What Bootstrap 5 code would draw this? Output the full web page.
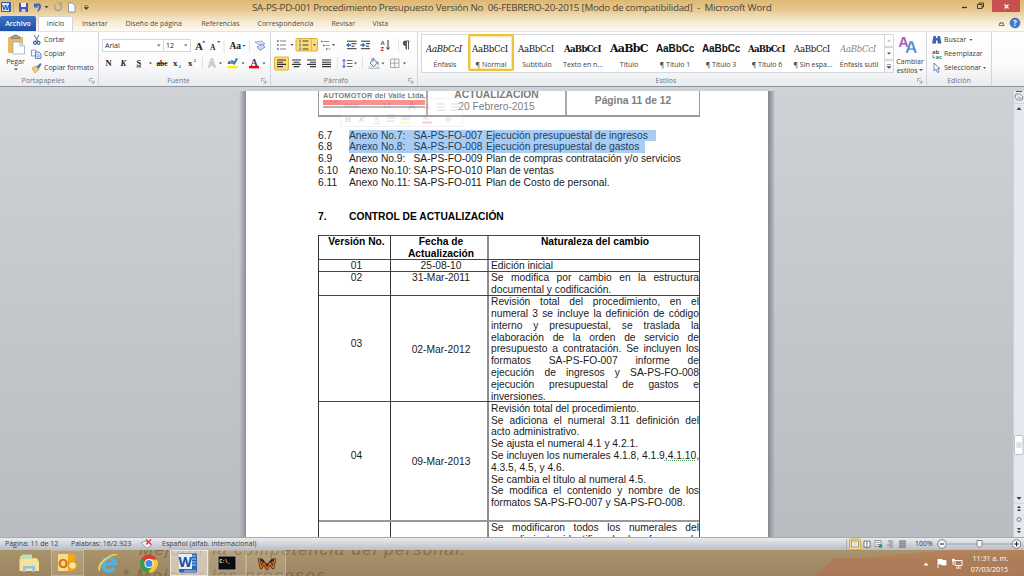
<!DOCTYPE html>
<html lang="es">
<head>
<meta charset="utf-8">
<title>Microsoft Word</title>
<link href="https://cdn.jsdelivr.net/npm/bootstrap@5.3.0/dist/css/bootstrap.min.css" rel="stylesheet">
<script src="https://cdn.jsdelivr.net/npm/bootstrap@5.3.0/dist/js/bootstrap.bundle.min.js"></script>
<style>
html,body{height:576px;overflow:hidden}
body{width:1024px;font-family:"Open Sans","Noto Sans",sans-serif;font-size:7px;line-height:10px;color:#3c3c3c;white-space:nowrap;background:#c5c9ce}
svg{display:block;flex:none;overflow:visible}
svg text{white-space:pre}
/* window frame */
.titlebar{height:16px}
.tabrow{height:15px;padding-right:2px}
.topframe{background:linear-gradient(#deb871 0,#e6c78c 30%,#f6ead2 70%,#fdfaf3 100%)}
.wintitle{font-size:9.8px;line-height:16px;color:#4c463c;white-space:pre;margin-left:158px;width:519px;letter-spacing:-.27px}
.closebtn{width:28px;height:12px;background:#c75050}
.filetab{width:36px;height:15px;background:linear-gradient(#3a75c9,#1d4fa5);color:#fff;border-radius:2px 2px 0 0;line-height:15px;font-weight:600}
.hometab{width:35px;height:15px;margin-left:2px;background:#fff;border:1px solid #d5d5d5;border-bottom:0;border-radius:2px 2px 0 0;line-height:14px}
.tabtxt{line-height:15px;color:#4c4c4c}
.t1{margin-left:9px;width:43.500px}.t2{width:76px}.t3{width:56px}.t4{width:74px}.t5{width:41px}
/* ribbon */
.ribbon{height:56px;background:linear-gradient(#fff,#fbfbfc 60%,#e9ebee);border-top:1px solid #e3e3e3;border-bottom:1px solid #8f959d}
.rgroup{border-right:1px solid #d3d6da;height:54px}
.rbody{height:44px}
.rlabel{height:10px;line-height:10px;color:#6d7888}
.launch{position:absolute;right:3px;top:2px}
.g1{width:99px}.g2{width:172px}.g3{width:147px}.g4{width:509px}.g5{width:65px}
.combo{height:13px;border:1px solid #d5d8dc;background:#fff;line-height:11px;padding-left:2px;color:#222}
.cfont{width:62px}.csize{width:28px;margin-left:-1px}
.row1{padding:5px 0 0 3px;height:22px}
.row2{height:18px}
.paste{width:31px}
.gap1{height:1px}
.gallery{width:463px;height:39px;background:#fff;border:1px solid #d5d8dc;border-right:0;margin:2px 0 0 3px}
.sty{width:46px;height:37px;overflow:hidden}
.sty.on{border:2px solid #eec13e;border-radius:2px;box-shadow:inset 0 0 0 1px #fbe9a8;margin-top:-1px}
.sty.on .pv{margin-top:-1px}
.pv{height:25px;line-height:28px;width:38px;overflow:hidden;font-family:"DejaVu Serif",serif;color:#111;font-size:8.6px;letter-spacing:-.3px}
.pvb{font-weight:700;letter-spacing:-.7px}
.pvt{font-weight:700;font-size:11px;letter-spacing:-.7px}
.pvs{font-weight:700;font-family:"Liberation Sans",sans-serif;font-size:10px;letter-spacing:-.1px}
.pvg{color:#888}
.nm{line-height:9px;color:#3c3c3c}
.scr{width:10px;height:39px;margin-top:2px}
.scr>div{height:13px;border:1px solid #d5d8dc;display:flex;align-items:center;justify-content:center}
.chg{width:32px}
.chgtxt{line-height:9px}
.cmdrow{height:14px;line-height:14px}
.under{height:4px;background:#cfd3d8}
/* work area */
.work{height:446px;background:linear-gradient(#ced2d7,#b9bcc1)}
.gutter{width:246px;background:linear-gradient(90deg,transparent 239px,#a4a8ae 243px,#8b8f95)}
.gutter2{width:245px;background:linear-gradient(270deg,transparent 238px,#a4a8ae 241px,#85898f)}
.sheet{width:522px;background:#fff;overflow:hidden;font-family:"Liberation Sans",Arial,sans-serif;font-size:10.25px;line-height:11.8px;color:#1a1a1a;padding-left:72px;position:relative}
.vscroll{width:11px;background:#e3e7ef;border-left:1px solid #cdd2da}
.hdr{width:382px;height:26px;border:solid #9a9a9a;border-width:0 1px 2px 1px;color:#7e7e7e}
.hc1{width:109px;border-right:2px solid #aaa;overflow:hidden}
.hc2{width:139px;border-right:2px solid #aaa;overflow:hidden}
.act{margin-top:-2px}
.pag{padding-top:3.500px}
.logo{font-size:7.4px;line-height:8px;font-weight:700;color:#7c7f86;margin:1px 0 0 4px;letter-spacing:.14px}
.redline{height:5px;width:102px;background:#fa8484;margin:0 0 1px 4px}
.grayline{height:2px;width:102px;background:#b3b3b3;margin-left:4px}
.ghost{position:absolute;left:94px;top:7px;opacity:.25}
.anexos{padding-top:12.5px}
.a1{width:31px}.a2{width:64.500px}.a3{width:72.5px}
.sel{background:#a9cdf2;color:#1d3d63}
.s7{width:307px}.s8{width:295.5px}
.sec{margin-top:23px;letter-spacing:.02px;color:#000}
.vt{width:382px;margin-top:12px;border-left:1px solid #333;border-right:1px solid #444}
.vrow{border-top:1px solid #444}
.v1,.v2,.v3{flex:none}
.v1{width:72px;border-right:1px solid #333}
.v2{width:98px;border-right:2px solid #8c8c8c}
.v3{width:210px;padding-left:2px}
.v3 p{margin:0}
.j{text-align:justify;text-align-last:justify}
.j,.v3 p{white-space:normal}
.r0{height:23.500px;line-height:11.500px}.r1{height:12px}.r2{height:24.500px}.r3{height:106px}.r4{height:118.500px}.r5{height:30px}
.r3 .v1{padding-top:42px}.r3 .v2{padding-top:48px}
.r4 .v1{padding-top:48px}.r4 .v2{padding-top:54px}
.r4 .v3{padding-top:.5px}
.r5{border-top:2px solid #999}
.gram{text-decoration:underline dotted #55a955 1px;text-underline-offset:1px}
/* status bar and taskbar */
.status{height:13px;background:linear-gradient(#e9ebee,#b9bdc5);border-top:1px solid #a7abb0;line-height:12px}
.st1{margin-left:5px;width:66px}.st2{width:70px}.st3{margin-left:4px;width:21px}
.task{height:26px;background:linear-gradient(#a9946b,#9c8562);overflow:hidden;position:relative}
.wall{position:absolute;left:0;top:0}
.tbtn{height:26px;border:1px solid rgba(255,255,255,.22);background:rgba(255,255,255,.13)}
.tact{background:rgba(255,255,255,.5);border-color:rgba(255,255,255,.6)}
.b1{width:33px}.b2{width:38px}.b3{width:40px}
.clock{color:#fff;line-height:11px;font-size:7.2px;letter-spacing:-.1px;width:40px;padding-top:3px;margin-right:16px}
</style>
</head>
<body>
<header class="topframe">
 <div class="titlebar d-flex align-items-start">
  <svg width="94" height="16" viewBox="0 0 94 16">
   <rect x="1" y="2" width="10" height="10" rx="1" fill="#2a5db0"/><rect x="2" y="3" width="7" height="8" fill="#dbe7f7"/><text x="2" y="10.3" font-size="7.5" font-weight="700" fill="#1e50a0" textLength="7">W</text>
   <path d="M13.5 3v9M81.500 3v9" stroke="#bfa368" stroke-width=".7"/>
   <path d="M19 3h9v9h-8l-1-1z" fill="#4457b5"/><path d="M21 3h5v4h-5z" fill="#eef"/><path d="M21.500 9h4v3h-4z" fill="#ccd"/>
   <path d="M34 3v4.500h4.500L37 6c2-1.300 2.500.5 1 4l-1 2c4-2 5-6 3-8-1.500-1.200-3-.8-4.500.3z" fill="#3c62c2"/>
   <path d="M44.500 6h4l-2 2.300z" fill="#444"/>
   <path d="M56 4.500a3.300 3.300 0 1 0 4 0M58.500 3h3v3z" fill="none" stroke="#aaa69c" stroke-width="1.600"/>
   <path d="M68.500 3h4l2.500 2.500V12h-6.500z" fill="#fff" stroke="#6d83a8" stroke-width=".8"/>
   <path d="M84.200 5.800h4M84 7.500h4.500L86.200 9.500z" fill="#444" stroke="#444" stroke-width=".7"/>
  </svg>
  <div class="wintitle">SA-PS-PD-001 Procedimiento Presupuesto Versión No  06-FEBRERO-20-2015 [Modo de compatibilidad]  -  Microsoft Word</div>
  <svg class="ms-auto" width="56" height="12"><path d="M26 7.500h5" stroke="#333" stroke-width="1.300"/><path d="M41.500 4.500h4.500v4h-4.500zM43 4.500V3h4.500v4H46" fill="none" stroke="#333" stroke-width=".9"/></svg>
  <div class="closebtn d-flex align-items-center justify-content-center me-1"><svg width="5" height="5"><path d="M.5.5l4 4m0-4l-4 4" stroke="#fff" stroke-width="1.200"/></svg></div>
 </div>
 <nav class="tabrow d-flex">
  <div class="filetab text-center">Archivo</div>
  <div class="hometab text-center">Inicio</div>
  <div class="tabtxt d-flex">
   <span class="t1">Insertar</span><span class="t2">Diseño de página</span><span class="t3">Referencias</span><span class="t4">Correspondencia</span><span class="t5">Revisar</span><span>Vista</span>
  </div>
  <svg class="ms-auto" width="28" height="15"><path d="M5 9.500q0-3 2.500-3t2.500 3zM6 8l1.500-1.500L9 8" fill="none" stroke="#555" stroke-width=".8"/><circle cx="21" cy="7" r="5" fill="#3d7bd0" stroke="#2c5fa8" stroke-width=".5"/><text x="19" y="10" font-size="8" font-weight="700" fill="#fff">?</text></svg>
 </nav>
</header>

<section class="ribbon d-flex">
 <div class="rgroup g1">
  <div class="rbody d-flex">
   <div class="text-center paste">
    <svg width="31" height="26" viewBox="0 0 31 26"><rect x="8" y="5" width="15" height="16" rx="1" fill="#e9b95c"/><path d="M11 6.500h9V4.500h-2.500V3h-4v1.500H11z" fill="#9aa2ae" stroke="#606874" stroke-width=".5"/><path d="M13 10h7l4.500 4v8H13z" fill="#fdfeff" stroke="#8ea3c4" stroke-width=".7"/><path d="M20 10v4h4.500" fill="#dce6f4" stroke="#8ea3c4" stroke-width=".6"/></svg>
    <div class="lh-1">Pegar</div>
    <svg width="31" height="6"><path d="M14 3.500h4l-2 2z" fill="#555"/></svg>
   </div>
   <div>
    <div class="gap1"></div>
    <div class="cmdrow d-flex"><svg width="13" height="14"><path d="M3 2l4 6M8 2L4.500 8" stroke="#7b8796" stroke-width="1.100"/><circle cx="4" cy="9.800" r="1.500" fill="none" stroke="#2f60b8" stroke-width="1.200"/><circle cx="7.500" cy="9.800" r="1.500" fill="none" stroke="#2f60b8" stroke-width="1.200"/></svg>Cortar</div>
    <div class="cmdrow d-flex"><svg width="13" height="14"><path d="M.5 3H5v6H.5z" fill="#f4f8fe" stroke="#6788c0" stroke-width=".8"/><path d="M4.500 5H8l2 2v4.500H4.500z" fill="#dce9fa" stroke="#3f6cb5" stroke-width=".8"/><path d="M5.500 8h3M5.500 9.700h3" stroke="#6d94d2" stroke-width=".7"/></svg>Copiar</div>
    <div class="cmdrow d-flex"><svg width="13" height="14"><path d="M1 7l4-2 3 3.500-4 3.500z" fill="#f0cf6c" stroke="#b48c2c" stroke-width=".6"/><path d="M5.500 5.500L9.500 2l1 1.500L7.700 8z" fill="#5878a8"/></svg>Copiar formato</div>
   </div>
  </div>
  <div class="rlabel text-center position-relative"><span class="me-2 pe-1">Portapapeles</span><svg class="launch" width="6" height="6"><path d="M.5 4V.5H4M2 2l3 3M5 2.500V5H2.500" fill="none" stroke="#8a929d" stroke-width=".7"/></svg></div>
 </div>

 <div class="rgroup g2">
  <div class="rbody">
   <div class="row1 d-flex align-items-center">
    <div class="combo cfont d-flex justify-content-between">Arial<svg width="8" height="11"><path d="M2 4.500h3.500l-1.700 2z" fill="#666"/></svg></div>
    <div class="combo csize d-flex justify-content-between">12<svg width="8" height="11"><path d="M2 4.500h3.500l-1.700 2z" fill="#666"/></svg></div>
    <svg width="79" height="16" font-family="Liberation Serif" fill="#222"><text x="4" y="12" font-size="11" font-weight="700">A</text><path d="M11 4.500h3.500l-1.700-2zM26 3h3.500L27.800 5z" fill="#3465b8"/><text x="19" y="12" font-size="7.500" font-weight="700">A</text><path d="M33 2v12M58.500 2v12" stroke="#d8dade" stroke-width=".8"/><text x="38.500" y="11" font-size="9.500" font-weight="700">Aa</text><path d="M51.500 7h3l-1.500 2z" fill="#555"/><path d="M64 4l7-1 3 3-5 1z" fill="#dde6f5" stroke="#6681ad" stroke-width=".6"/><path d="M66 9l5-3 3 3-5 3.500z" fill="#c9d9f2" stroke="#5573a8" stroke-width=".7"/></svg>
   </div>
   <div class="row2">
    <svg width="170" height="18" font-family="Liberation Serif" font-weight="700" fill="#222"><text x="6.500" y="12" font-size="8.500">N</text><text x="21.500" y="12" font-size="8.500" font-style="italic">K</text><text x="37.500" y="11.500" font-size="8.500" text-decoration="underline">S</text><path d="M50 8.500h3l-1.500 2zM120 8.500h3l-1.500 2zM142.500 8.500h3l-1.500 2zM163.500 8.500h3l-1.500 2z" fill="#555"/><text x="57.500" y="12" font-size="7.500" textLength="11" text-decoration="line-through">abc</text><text x="74" y="12" font-size="9">x</text><text x="79.500" y="14" font-size="5" fill="#2e62ba">2</text><text x="89" y="12" font-size="9">x</text><text x="94.500" y="8" font-size="5" fill="#2e62ba">2</text><path d="M103.500 3v12" stroke="#d8dade" stroke-width=".8"/><text x="109" y="12.500" font-size="10.500" fill="#fff" stroke="#b6bac2" stroke-width=".8" font-family="Liberation Sans">A</text><text x="128.500" y="9.500" font-size="6.500" textLength="7">ab</text><path d="M134 10l3-6 2 .8L135.500 11z" fill="#4b73b4"/><rect x="128.500" y="12" width="10" height="2.300" fill="#fff000"/><text x="151.500" y="11.500" font-size="10" fill="#25427a">A</text><rect x="150" y="12" width="10" height="2.300" fill="#f00000"/></svg>
   </div>
  </div>
  <div class="rlabel text-center position-relative"><span class="me-2 pe-1">Fuente</span><svg class="launch" width="6" height="6"><path d="M.5 4V.5H4M2 2l3 3M5 2.500V5H2.500" fill="none" stroke="#8a929d" stroke-width=".7"/></svg></div>
 </div>

 <div class="rgroup g3">
  <div class="rbody">
   <svg width="146" height="44" viewBox="271 32 146 44">
    <path d="M277 41h1.700M277 45h1.700M277 49h1.700" stroke="#3465b8" stroke-width="1.500"/><path d="M280 41h6M280 45h6M280 49h6" stroke="#666" stroke-width=".8"/>
    <rect x="296" y="38.500" width="21.500" height="12.500" rx="1" fill="#fcdc78" stroke="#dba92d" stroke-width=".9"/><path d="M311.500 39v12" stroke="#dba92d" stroke-width=".7"/>
    <path d="M300 39.500v3M300 43.500v3M300 47.500v3" stroke="#3465b8" stroke-width="1"/><path d="M302.500 41h6M302.500 45h6M302.500 49h6" stroke="#444" stroke-width="1"/>
    <path d="M321 41.500h1.500M323 45.500h1.500M326 49h1.500" stroke="#3465b8" stroke-width="1.500"/><path d="M323.500 41.500h6M325.500 45.500h4M328.500 49h2" stroke="#777" stroke-width=".8"/>
    <path d="M290.500 44h3l-1.500 2zM313 44h3l-1.500 2zM332 44h3l-1.500 2zM354 62.500h3l-1.500 2zM381.500 62.500h3l-1.500 2zM403 62.500h3l-1.500 2z" fill="#555"/>
    <path d="M347 41.200h9.500M351.500 43.700h5M351.500 46.200h3M347 48.700h9.500M361 41.200h9M366 43.700h4M366 46.200h3M361 48.700h9" stroke="#333" stroke-width="1"/><path d="M346 45l3-2.200v1.500h2v1.400h-2v1.500zM365.500 45l-3-2.200v1.500h-2v1.400h2v1.500z" fill="#2f67c4"/>
    <text x="380.500" y="44.500" font-size="6" font-weight="700" fill="#2f5fc0">A</text><text x="380.500" y="50.500" font-size="6" font-weight="700" fill="#a33">Z</text><path d="M388 40v9M386.500 47.500l1.500 2 1.500-2" fill="none" stroke="#333" stroke-width="1"/>
    <path d="M398.500 39v12M337.500 57v12M362.500 57v12" stroke="#d8dade" stroke-width=".8"/><path d="M409.500 41h-4a2 2 0 0 0 0 4.500h.5V49M406.500 41v8.500M408.500 41v8.500" fill="none" stroke="#444" stroke-width=".9"/><path d="M403.300 43.300a2 2 0 0 1 2.500-2.300v4.500a2.200 2.200 0 0 1-2.500-2.200" fill="#444"/>
    <rect x="274.500" y="57" width="14" height="13" rx="1" fill="#fcdc78" stroke="#dba92d" stroke-width=".9"/>
    <path d="M277 60h9M277 62.200h6M277 64.400h9M277 66.600h6M292 60h9M293.500 62.200h6M292 64.400h9M293.500 66.600h6M307 60h9M310 62.200h6M307 64.400h9M310 66.600h6M322 60h9M322 62.200h9M322 64.400h9M322 66.600h9" stroke="#333" stroke-width="1.100"/>
    <path d="M344 60v7M342.500 61.200l1.500-2 1.500 2M342.500 65.800l1.500 2 1.500-2" fill="none" stroke="#3465b8" stroke-width="1"/><path d="M347 60.500h5.500M347 63.500h5.500M347 66.500h5.500" stroke="#555" stroke-width=".9"/>
    <path d="M370 63l4-3.500 3.500 3.500-4 3.500z" fill="#eef3fb" stroke="#4f6796" stroke-width=".9"/><path d="M372 61v-2.500h2v2" fill="none" stroke="#666" stroke-width=".7"/><path d="M376.500 61q3 1.500 2 4.500z" fill="#3465b8"/><rect x="369" y="67" width="10" height="1.500" fill="#fff" stroke="#888" stroke-width=".5"/>
    <path d="M390.500 59h8.500v8.500h-8.500zM394.700 59v8.500M390.500 63.200h8.500" fill="none" stroke="#999" stroke-width=".8"/>
   </svg>
  </div>
  <div class="rlabel text-center position-relative"><span class="me-3">Párrafo</span><svg class="launch" width="6" height="6"><path d="M.5 4V.5H4M2 2l3 3M5 2.500V5H2.500" fill="none" stroke="#8a929d" stroke-width=".7"/></svg></div>
 </div>

 <div class="rgroup g4">
  <div class="rbody d-flex">
   <div class="gallery d-flex">
    <div class="sty d-flex flex-column align-items-center"><div class="pv fst-italic">AaBbCcI</div><div class="nm">Énfasis</div></div>
    <div class="sty on d-flex flex-column align-items-center"><div class="pv">AaBbCcI</div><div class="nm">¶ Normal</div></div>
    <div class="sty d-flex flex-column align-items-center"><div class="pv">AaBbCcI</div><div class="nm">Subtítulo</div></div>
    <div class="sty d-flex flex-column align-items-center"><div class="pv pvb">AaBbCcI</div><div class="nm">Texto en n...</div></div>
    <div class="sty d-flex flex-column align-items-center"><div class="pv pvt">AaBbCcI</div><div class="nm">Título</div></div>
    <div class="sty d-flex flex-column align-items-center"><div class="pv pvs">AaBbCcI</div><div class="nm">¶ Título 1</div></div>
    <div class="sty d-flex flex-column align-items-center"><div class="pv pvs">AaBbCcI</div><div class="nm">¶ Título 3</div></div>
    <div class="sty d-flex flex-column align-items-center"><div class="pv pvb">AaBbCcI</div><div class="nm">¶ Título 6</div></div>
    <div class="sty d-flex flex-column align-items-center"><div class="pv">AaBbCcI</div><div class="nm">¶ Sin espa...</div></div>
    <div class="sty d-flex flex-column align-items-center"><div class="pv pvg fst-italic">AaBbCcI</div><div class="nm">Énfasis sutil</div></div>
   </div>
   <div class="scr"><div><svg width="4" height="3"><path d="M0 2.500h4L2 .5z" fill="#bbb"/></svg></div><div><svg width="4" height="3"><path d="M0 .5h4l-2 2z" fill="#444"/></svg></div><div><svg width="4" height="5"><path d="M0 .5h4M0 2.500h4l-2 2z" fill="#444" stroke="#444" stroke-width=".5"/></svg></div></div>
   <div class="text-center chg">
    <svg width="32" height="25" font-family="Liberation Sans" font-weight="700"><text x="4.500" y="15" font-size="14" fill="#a759b9">A</text><text x="11" y="21" font-size="17" fill="#4480c8" stroke="#fff" stroke-width=".3">A</text></svg>
    <div class="chgtxt">Cambiar<br>estilos <svg class="d-inline" width="4" height="4"><path d="M0 0h4L2 2z" fill="#555"/></svg></div>
   </div>
  </div>
  <div class="rlabel text-center position-relative"><span class="me-2 pe-1">Estilos</span><svg class="launch" width="6" height="6"><path d="M.5 4V.5H4M2 2l3 3M5 2.500V5H2.500" fill="none" stroke="#8a929d" stroke-width=".7"/></svg></div>
 </div>

 <div class="rgroup g5">
  <div class="rbody ps-1">
    <div class="gap1"></div>
    <div class="cmdrow d-flex"><svg width="13" height="14"><path d="M2.500 3h2.500v2h1.500V3H9l1.500 7.500h-4V7.500H5v3H1z" fill="#3f66ab"/></svg>Buscar<svg width="9" height="14"><path d="M3.500 6h3l-1.500 2z" fill="#555"/></svg></div>
    <div class="cmdrow d-flex"><svg width="13" height="14" font-weight="700"><text x="1" y="7" font-size="6" fill="#555">ab</text><text x="4.500" y="11.500" font-size="6" fill="#3b8a3f">ac</text><path d="M2 8v2.500h2" fill="none" stroke="#3465b8" stroke-width=".8"/></svg>Reemplazar</div>
    <div class="cmdrow d-flex"><svg width="13" height="14"><path d="M3 2v8l2-1.800L6.500 11.500l1.500-.7L6.500 7.700H9z" fill="#fff" stroke="#4a6ba5" stroke-width=".8"/></svg>Seleccionar<svg width="8" height="14"><path d="M2 6h3L3.500 8z" fill="#555"/></svg></div>
  </div>
  <div class="rlabel text-center">Edición</div>
 </div>
</section>
<div class="under"></div>

<main class="work d-flex">
 <div class="gutter"></div>
 <article class="sheet">
  <div class="hdr d-flex">
   <div class="hc1"><div class="logo">AUTOMOTOR del Valle Ltda.</div><div class="redline"></div><div class="grayline"></div></div>
   <div class="hc2 text-center"><div class="fw-bold act">ACTUALIZACIÓN</div>20 Febrero-2015</div>
   <div class="flex-fill text-center fw-bold pag">Página 11 de 12</div>
  </div>
  <svg class="ghost" width="124" height="30" viewBox="0 0 124 30"><rect x=".5" y=".5" width="122" height="28" fill="#fff" fill-opacity=".4" stroke="#ccc"/><g font-size="8" fill="#777"><text x="3" y="10">Arial</text><text x="42" y="10">12</text><text x="68" y="12" font-size="11">A</text><text x="84" y="12" font-size="9">A</text><text x="5" y="24" font-weight="700">N</text><text x="19" y="24" font-weight="700" font-style="italic">K</text><text x="34" y="24" text-decoration="underline">S</text><text x="61" y="22">ab</text><text x="83" y="22">A</text></g><path d="M97 6h8M97 9h8M97 12h8M111 6h8M111 9h8M111 12h8M47 17h8M47 20h8M47 23h8" stroke="#777"/><path d="M60 24.500h10" stroke="#ee0" stroke-width="2"/><path d="M82 24.500h10" stroke="#f33" stroke-width="2"/><path d="M105 21l4-3 3 3-4 4z" fill="#cb6"/></svg>

  <div class="anexos">
   <div class="d-flex"><span class="a1">6.7</span><div class="sel s7 d-flex"><span class="a2">Anexo No.7:</span><span class="a3">SA-PS-FO-007</span>Ejecución presupuestal de ingresos</div></div>
   <div class="d-flex"><span class="a1">6.8</span><div class="sel s8 d-flex"><span class="a2">Anexo No.8:</span><span class="a3">SA-PS-FO-008</span>Ejecución presupuestal de gastos</div></div>
   <div class="d-flex"><span class="a1">6.9</span><span class="a2">Anexo No.9:</span><span class="a3">SA-PS-FO-009</span>Plan de compras contratación y/o servicios</div>
   <div class="d-flex"><span class="a1">6.10</span><span class="a2">Anexo No.10:</span><span class="a3">SA-PS-FO-010</span>Plan de ventas</div>
   <div class="d-flex"><span class="a1">6.11</span><span class="a2">Anexo No.11:</span><span class="a3">SA-PS-FO-011</span>Plan de Costo de personal.</div>
  </div>
  <div class="sec d-flex fw-bold"><span class="a1">7.</span>CONTROL DE ACTUALIZACIÓN</div>

  <div class="vt">
   <div class="vrow r0 d-flex text-center fw-bold text-black"><div class="v1 ps-1">Versión No.</div><div class="v2 ps-1">Fecha de<br>Actualización</div><div class="v3">Naturaleza del cambio</div></div>
   <div class="vrow r1 d-flex"><div class="v1 ps-1 text-center">01</div><div class="v2 ps-1 text-center">25-08-10</div><div class="v3">Edición inicial</div></div>
   <div class="vrow r2 d-flex"><div class="v1 ps-1 text-center">02</div><div class="v2 ps-1 text-center">31-Mar-2011</div><div class="v3"><p class="j">Se modifica por cambio en la estructura</p><p>documental y codificación.</p></div></div>
   <div class="vrow r3 d-flex"><div class="v1 ps-1 text-center">03</div><div class="v2 ps-1 text-center">02-Mar-2012</div><div class="v3"><p class="j">Revisión total del procedimiento, en el</p><p class="j">numeral 3 se incluye la definición de código</p><p class="j">interno y presupuestal, se traslada la</p><p class="j">elaboración de la orden de servicio de</p><p class="j">presupuesto a contratación. Se incluyen los</p><p class="j">formatos SA-PS-FO-007 informe de</p><p class="j">ejecución de ingresos y SA-PS-FO-008</p><p class="j">ejecución presupuestal de gastos e</p><p>inversiones.</p></div></div>
   <div class="vrow r4 d-flex"><div class="v1 ps-1 text-center">04</div><div class="v2 ps-1 text-center">09-Mar-2013</div><div class="v3"><p>Revisión total del procedimiento.</p><p class="j">Se adiciona el numeral 3.11 definición del</p><p>acto administrativo.</p><p>Se ajusta el numeral 4.1 y 4.2.1.</p><p class="text-nowrap">Se incluyen los numerales 4.1.8, 4.1.9<span class="gram">,4.1.10</span>,</p><p>4.3.5, 4.5, y 4.6.</p><p>Se cambia el título al numeral 4.5.</p><p class="j">Se modifica el contenido y nombre de los</p><p>formatos SA-PS-FO-007 y SA-PS-FO-008.</p></div></div>
   <div class="vrow r5 d-flex"><div class="v1"></div><div class="v2"></div><div class="v3"><p class="j">Se modificaron todos los numerales del</p><p class="j">procedimiento identificando las formas de</p></div></div>
  </div>
 </article>
 <div class="gutter2"></div>
 <div class="vscroll">
  <svg width="10" height="446" viewBox="0 91 10 446"><path d="M2 91.500h6" stroke="#555" stroke-width="1"/><path d="M2 94h4l3 3-1 3H3l-2-3z" fill="#f5f5f5" stroke="#777" stroke-width=".8"/><path d="M3 95l4 4M3 98h5" stroke="#888" stroke-width=".6"/><path d="M0 103.500h10M0 503.500h10" stroke="#c1c6ce" stroke-width=".6"/><path d="M2.500 110h5L5 107zM2.500 497h5L5 500zM3 508h4L5 505.800zM3 511h4L5 508.800zM3 528h4L5 530.200zM3 531h4L5 533.200z" fill="#444"/><circle cx="5" cy="519.500" r="2" fill="none" stroke="#777" stroke-width=".9"/><rect x=".5" y="435.500" width="8.500" height="19" rx="1" fill="#fff" stroke="#aab0ba" stroke-width=".8"/><path d="M2.500 443h5M2.500 445h5M2.500 447h5" stroke="#999" stroke-width=".6"/></svg>
 </div>
</main>

<footer>
 <div class="status d-flex">
  <span class="st1">Página: 11 de 12</span><span class="st2">Palabras: 16/2.923</span>
  <svg width="21" height="12"><path d="M0 5l5-2 6 4-5 3z" fill="#f6f8fc" stroke="#6d86b0" stroke-width=".7"/><path d="M5 1.500l5 5m0-5l-5 5" stroke="#d33" stroke-width="1.300"/></svg>
  <span>Español (alfab. internacional)</span>
  <svg class="ms-auto" width="65" height="12"><path d="M.5 1v11" stroke="#9a9ea6" stroke-width=".7"/><rect x="3.500" y="1" width="11" height="10.500" rx="1" fill="#fde08a" stroke="#e0a92c"/><rect x="5.500" y="3" width="7" height="6" fill="#fff" stroke="#777" stroke-width=".8"/><path d="M7 5h4M7 7h4" stroke="#888" stroke-width=".6"/><path d="M18 3q2-.5 3 .5 1.500-1 3-.5v6q-2 0-3 .8Q20 9 18 9zM21 3.500V9.500" fill="#fff" stroke="#555" stroke-width=".8"/><path d="M29 2.500h6v6h-6zM30.500 4.500h3M30.500 6.500h3" fill="#f4f4f4" stroke="#777" stroke-width=".7"/><circle cx="34.500" cy="8" r="1.900" fill="#2f8f94"/><path d="M42 3h5M43 5h4M41 7h6M43 9h4" stroke="#888"/><path d="M53 3.200h7M53 5.200h7M53 7.200h7M53 9.200h7" stroke="#777" stroke-width="1.200"/></svg>
  <span class="st3">100%</span>
  <svg width="88" height="12"><path d="M12 6h64" stroke="#9095a0" stroke-width=".8"/><circle cx="6" cy="6" r="4.300" fill="#f5f6f8" stroke="#666" stroke-width=".8"/><circle cx="80.500" cy="6" r="4.300" fill="#f5f6f8" stroke="#666" stroke-width=".8"/><path d="M3.800 6h4.500M78.200 6h4.500M80.500 3.700v4.600" stroke="#222" stroke-width="1"/><path d="M41 2.500h5v5L43.500 9.500 41 7.500z" fill="#fff" stroke="#666" stroke-width=".8"/></svg>
 </div>
 <div class="task d-flex">
  <svg class="wall" width="1024" height="26" font-family="Liberation Sans" font-style="italic" font-size="17" fill="#6b5636" fill-opacity=".6"><path d="M815 26l19-18H1024V26z" fill="#b5714e"/><path d="M860 8L950 0H1024V8z" fill="#c0714c" opacity=".8"/><text x="139" y="4.500" textLength="326">Mejorar la competencia del personal.</text><text x="122" y="31" textLength="203">* Mejorar los procesos</text></svg>
  <svg class="position-relative" width="51" height="26"><path d="M20 6h7l1 2h9v13H20z" fill="#efd27c"/><path d="M22 4.500h10v6H22z" fill="#bfe0b5"/><path d="M19.500 9h18l1.500 3v9H19.500z" fill="#f7e29b"/><path d="M23 22v-6h12v6h-2.500v-3.500h-7V22z" fill="#8dc3ea"/></svg>
  <div class="tbtn b1 position-relative"><svg width="31" height="24"><rect x="6" y="3" width="17" height="17" rx="1.500" fill="#f3a620"/><rect x="6" y="3" width="10" height="17" fill="#fbd98a"/><text x="6" y="16.500" font-size="13" font-weight="700" fill="#d27405">O</text><circle cx="20.500" cy="14.500" r="4" fill="#fde7a8" stroke="#e79a14" stroke-width="1.500"/></svg></div>
  <svg class="position-relative" width="86" height="26" viewBox="84 0 86 26"><path d="M115.500 14.500A6.300 6.300 0 1 0 114.500 18" fill="none" stroke="#49b5ee" stroke-width="3.600"/><path d="M104 14h12.500" stroke="#49b5ee" stroke-width="2.800"/><path d="M100 21.500q-1-7 8-13 7-5 9.500-2.500-1-4-8-.5-13 7-11 15z" fill="#f6cf48"/><circle cx="149" cy="13.500" r="9" fill="#d93a2b"/><path d="M149 13.500L141.200 9A9 9 0 0 0 148 22.500l5-7z" fill="#2fa04d"/><path d="M149 13.500V9.500h8A9 9 0 0 1 148 22.500l5-7z" fill="#f6c92e"/><circle cx="149" cy="13.500" r="4.100" fill="#4a87e0" stroke="#fff" stroke-width="1.100"/></svg>
  <div class="tbtn tact b2 position-relative"><svg width="36" height="24"><rect x="8" y="2.500" width="18" height="19" rx="1" fill="#2a65b5"/><path d="M8 3h13v15H8z" fill="#e4eefb"/><path d="M21 5h4M21 8h4M21 11h4M21 14h4M13 20h12" stroke="#b9d2f3"/><text x="7.500" y="16" font-size="13.500" font-weight="700" fill="#1c4f9f" textLength="13.500" lengthAdjust="spacingAndGlyphs">W</text></svg></div>
  <div class="tbtn b2 position-relative"><svg width="36" height="24"><rect x="9" y="5" width="18" height="14" fill="#0c0c0c" stroke="#aaa" stroke-width="1"/><text x="10.500" y="11.500" font-size="4.500" font-weight="700" fill="#fff" font-family="Liberation Mono">C:\_</text></svg></div>
  <div class="tbtn b3 position-relative"><svg width="38" height="24"><g fill="none" stroke-linejoin="round"><path d="M12 7l2 10 3-5 3 6 3-6 3 5 2-10M14 8l6 7 6-7" stroke="#33241a" stroke-width="2.600"/><path d="M12 7l2 10 3-5 3 6 3-6 3 5 2-10" stroke="#e96c1e" stroke-width="1.300"/></g></svg></div>
  <svg class="ms-auto position-relative" width="50" height="26"><path d="M5.500 15.500h5L8 12.500z" fill="#fff"/><path d="M20 9v9M20 9.500h4l1 1h3v4.500h-4l-1-1h-3" fill="#fff" stroke="#fff" stroke-width=".9"/><path d="M37 10.500h7v5h-7zM40.500 15.500v2M38 18h5M35 9v6" fill="none" stroke="#fff" stroke-width="1"/><circle cx="35.500" cy="10" r="1.500" fill="#fff"/></svg>
  <div class="clock text-end position-relative">11:31 a. m.<br>07/03/2015</div>
 </div>
</footer>
</body>
</html>
